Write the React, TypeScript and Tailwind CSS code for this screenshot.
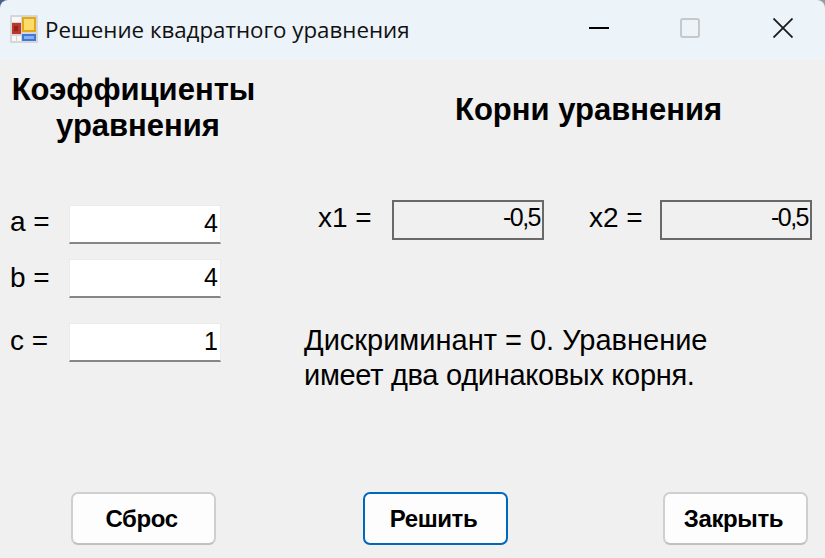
const sans = 'font-["Liberation_Sans",Arial,sans-serif]'

function AppIcon() {
  return (
    <svg width="28" height="28" viewBox="0 0 28 28" className="-mt-[2px] shrink-0">
      <rect x="0" y="0" width="28" height="28" rx="1" fill="#d6d6d6" />
      <rect x="2" y="2" width="9" height="5" fill="#f7f7f7" />
      <rect x="2" y="8" width="9" height="11" fill="#c0352b" />
      <rect x="4" y="11" width="4" height="5" fill="#8c241c" />
      <rect x="2" y="21" width="4" height="5" fill="#f7f7f7" />
      <rect x="7" y="21" width="4" height="5" fill="#f7f7f7" />
      <rect x="12" y="2" width="14" height="15" fill="#e3a817" />
      <rect x="14" y="4" width="10" height="11" fill="#fbdc6a" />
      <rect x="12" y="19" width="14" height="7" fill="#3f78d8" />
      <rect x="14" y="21" width="10" height="3" fill="#8ab0ee" />
    </svg>
  )
}

function CoefRow({ label, value, className, labelClass }: { label: string; value: string; className: string; labelClass: string }) {
  return (
    <div className={`flex items-center ${className}`}>
      <span className={`w-[59px] text-[28px] leading-[30px] text-black ${labelClass}`}>{label}</span>
      <div className="flex h-[39px] w-[152px] items-center justify-end border border-b-2 border-[#ebebeb] border-b-[#868686] bg-white pr-[3px] text-[25px] tracking-[-1px] text-black">
        {value}
      </div>
    </div>
  )
}

function RootBox({ value }: { value: string }) {
  return (
    <div className="flex h-[40px] w-[152px] items-center justify-end border-2 border-[#696969] pr-[2px] pb-[5px] text-[25px] tracking-[-1.5px] text-black">
      {value}
    </div>
  )
}

function FormButton({ label, focused }: { label: string; focused?: boolean }) {
  return (
    <button
      className={`h-[53px] w-[145px] rounded-[7px] border-2 bg-[#fdfdfd] pt-[1px] pr-[4px] text-[24px] font-bold tracking-[-0.4px] text-black ${
        focused ? 'border-[#0067c0]' : 'border-[#cfcfcf] border-b-[#c0c0c0]'
      }`}
    >
      {label}
    </button>
  )
}

export default function App() {
  return (
    <div className={`h-[558px] w-[825px] overflow-hidden bg-gradient-to-r from-[#4a5f8a] to-[#9a9a9a] ${sans}`}>
      <div className="flex h-[60px] items-center rounded-t-[8px] bg-[#ecf3f9] pl-[10px]">
        <AppIcon />
        <span className='ml-[7px] font-["Open_Sans",sans-serif] text-[22.3px] text-[#111]'>Решение квадратного уравнения</span>
        <div className="ml-auto mb-[4px] flex items-center pr-[32px]">
          <div className="h-[2px] w-[20px] bg-black" />
          <div className="ml-[71px] h-[20px] w-[20px] rounded-[3px] border-2 border-[#c8c8c8]" />
          <svg width="20" height="20" viewBox="0 0 20 20" className="ml-[73px]" fill="none" stroke="#1a1a1a" strokeWidth="1.8">
            <path d="M0.5 0.5 L19.5 19.5 M19.5 0.5 L0.5 19.5" />
          </svg>
        </div>
      </div>

      <div className="flex h-[498px] flex-col bg-[#f0f0f0]">
        <div className="flex">
          <div className="w-[304px] shrink-0 pl-[10px]">
            <h2 className="mt-[12px] w-[247px] text-center text-[31px] leading-[36px] font-bold text-black">
              Коэффициенты
              <br />
              <span className="pl-[9px]">уравнения</span>
            </h2>
            <CoefRow label="a =" value="4" className="mt-[61px]" labelClass="pb-[6px]" />
            <CoefRow label="b =" value="4" className="mt-[15px]" labelClass="pb-[2px]" />
            <CoefRow label="c =" value="1" className="mt-[25px]" labelClass="pb-[4px]" />
          </div>

          <div className="flex-1">
            <h2 className="mt-[32px] pl-[151px] text-[31px] leading-[36px] font-bold text-black">Корни уравнения</h2>
            <div className="mt-[72px] flex items-center pl-[14px]">
              <span className="w-[74px] pb-[4px] text-[28px] leading-[30px] text-black">x1 =</span>
              <RootBox value="-0,5" />
              <span className="ml-[45px] w-[71px] pb-[4px] text-[28px] leading-[30px] text-black">x2 =</span>
              <RootBox value="-0,5" />
            </div>
            <p className="mt-[83px] text-[29px] leading-[35px] text-black">
              Дискриминант = 0. Уравнение
              <br />
              <span className="tracking-[-0.3px]">имеет два одинаковых корня.</span>
            </p>
          </div>
        </div>

        <div className="mt-auto mb-[13px] flex pl-[71px]">
          <FormButton label="Сброс" />
          <div className="ml-[147px]">
            <FormButton label="Решить" focused />
          </div>
          <div className="ml-[155px]">
            <FormButton label="Закрыть" />
          </div>
        </div>
      </div>
    </div>
  )
}
